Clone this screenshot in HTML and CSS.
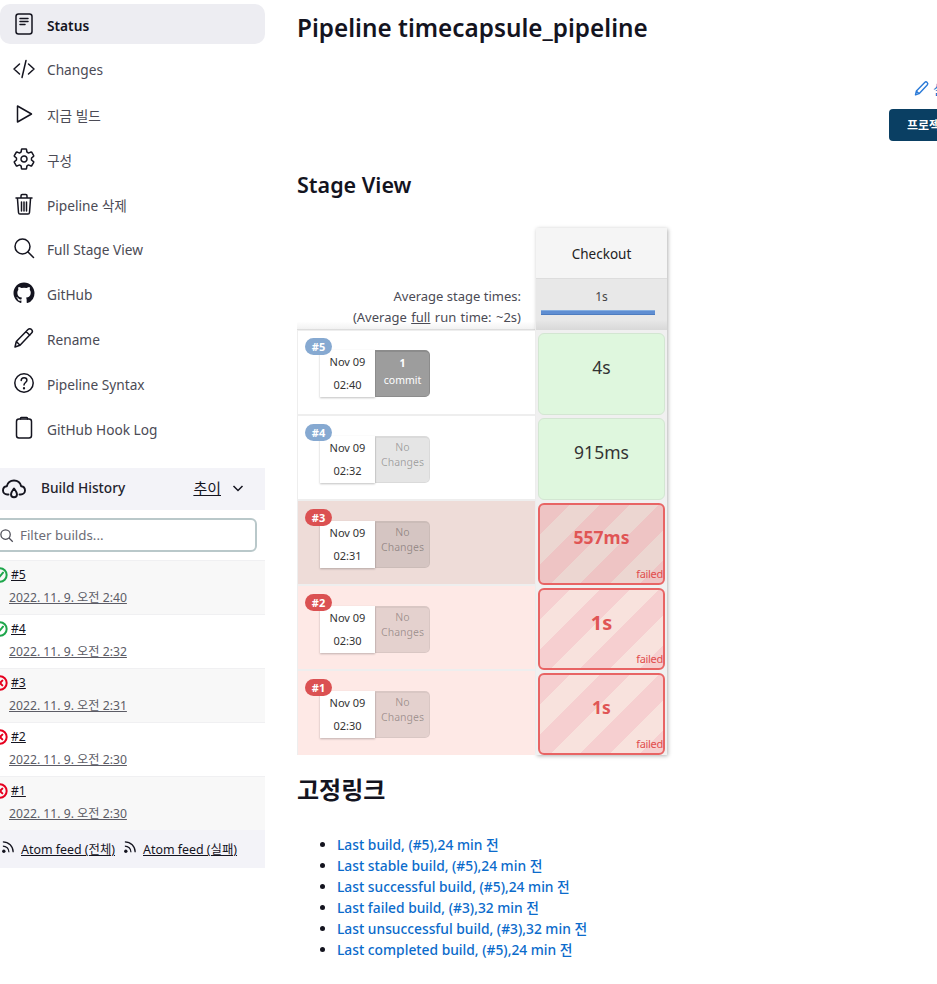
FILE: index.html
```html
<!DOCTYPE html>
<html lang="ko">
<head>
<meta charset="utf-8">
<title>timecapsule_pipeline</title>
<link rel="stylesheet" href="styles.css">
</head>
<body>
<div class="page">
  <aside class="sidebar">
    <nav class="tasks">
      <a class="task active"><svg class="ico" viewBox="0 0 24 24"><rect x="4" y="2" width="16" height="20" rx="2.500"/><path d="M8 6.500h8M8 9.500h8M8 12.500h5"/></svg>Status</a>
      <a class="task"><svg class="ico" viewBox="0 0 24 24"><path d="M7.500 7L2 12l5.500 5M16.500 7l5.500 5-5.500 5M14 3.500L10 20.500"/></svg>Changes</a>
      <a class="task"><svg class="ico" viewBox="0 0 24 24"><path d="M5.500 4v16L19.500 12z"/></svg>지금 빌드</a>
      <a class="task"><svg class="ico" viewBox="0 0 512 512"><path class="thick" d="M262.290 192.310a64 64 0 1057.400 57.400 64.130 64.130 0 00-57.400-57.400zM416.390 256a154.340 154.340 0 01-1.530 20.790l45.210 35.460a10.810 10.810 0 012.450 13.750l-42.770 74a10.810 10.810 0 01-13.140 4.590l-44.900-18.080a16.110 16.110 0 00-15.170 1.750A164.480 164.480 0 01325 400.800a15.940 15.940 0 00-8.820 12.140l-6.730 47.890a11.080 11.080 0 01-10.680 9.170h-85.540a11.110 11.110 0 01-10.690-8.870l-6.720-47.820a16.070 16.070 0 00-9-12.220 155.300 155.300 0 01-21.460-12.570 16 16 0 00-15.110-1.710l-44.890 18.070a10.810 10.810 0 01-13.140-4.580l-42.770-74a10.800 10.800 0 012.450-13.750l38.210-30a16.050 16.050 0 006-14.080c-.36-4.170-.58-8.330-.58-12.500s.21-8.270.58-12.350a16 16 0 00-6.070-13.940l-38.190-30A10.810 10.810 0 0149.480 186l42.770-74a10.810 10.810 0 0113.140-4.590l44.900 18.080a16.110 16.110 0 0015.170-1.750A164.480 164.480 0 01187 111.200a15.940 15.940 0 008.820-12.140l6.730-47.890A11.080 11.080 0 01213.230 42h85.540a11.110 11.110 0 0110.690 8.870l6.720 47.820a16.070 16.070 0 009 12.220 155.300 155.300 0 0121.460 12.570 16 16 0 0015.110 1.710l44.890-18.070a10.810 10.810 0 0113.140 4.580l42.770 74a10.800 10.800 0 01-2.450 13.750l-38.210 30a16.050 16.050 0 00-6.050 14.080c.33 4.140.55 8.300.55 12.470z"/></svg>구성</a>
      <a class="task"><svg class="ico" viewBox="0 0 24 24"><path d="M5.500 7l1 13.500c.1.900.700 1.500 1.500 1.500h8c.8 0 1.400-.6 1.500-1.500l1-13.500M4 6h16M9 6V3.700c0-.7.500-1.200 1.200-1.200h3.600c.7 0 1.200.5 1.200 1.200V6M9.500 10v9M12 10v9M14.500 10v9"/></svg>Pipeline 삭제</a>
      <a class="task"><svg class="ico" viewBox="0 0 24 24"><circle cx="10.500" cy="10.500" r="7.500"/><path d="M16 16l5.500 5.500"/></svg>Full Stage View</a>
      <a class="task"><svg class="ico solid" viewBox="0 0 24 24"><path d="M12 1.500C6.200 1.500 1.500 6.200 1.500 12c0 4.640 3 8.570 7.180 9.960.53.090.72-.23.72-.51v-1.830c-2.920.64-3.530-1.240-3.530-1.240-.48-1.210-1.170-1.530-1.170-1.530-.96-.65.070-.64.070-.64 1.060.070 1.620 1.090 1.620 1.090.94 1.610 2.470 1.140 3.070.87.090-.68.370-1.140.67-1.400-2.330-.27-4.790-1.170-4.790-5.190 0-1.140.41-2.080 1.080-2.810-.11-.27-.47-1.330.10-2.780 0 0 .89-.28 2.890 1.080a10 10 0 015.270 0c2-1.360 2.890-1.080 2.890-1.080.58 1.450.21 2.510.10 2.780.68.730 1.080 1.670 1.080 2.810 0 4.030-2.460 4.910-4.800 5.180.37.330.71.960.71 1.940v2.870c0 .28.190.61.73.50A10.500 10.500 0 0022.500 12C22.500 6.200 17.800 1.500 12 1.500z"/></svg>GitHub</a>
      <a class="task"><svg class="ico" viewBox="0 0 24 24"><path d="M3 21l1.300-5.500L16 3.500c1-1 2.500-1 3.500 0s1.100 2.500.1 3.500L8 19.300zM4.300 15.500L8 19.300M14 5.500l3.800 3.800"/></svg>Rename</a>
      <a class="task"><svg class="ico" viewBox="0 0 24 24"><circle cx="12" cy="12" r="9.200"/><path d="M9.200 9.500c0-1.700 1.300-2.800 2.900-2.800s2.800 1.100 2.800 2.500c0 2.300-2.900 2.300-2.900 4.800"/><path class="dot" d="M12 17v.4"/></svg>Pipeline Syntax</a>
      <a class="task"><svg class="ico" viewBox="0 0 24 24"><rect x="4.500" y="3" width="15" height="19" rx="2.500"/><path d="M8.500 3V2.300c0-.5.400-.8.800-.8h5.400c.4 0 .8.300.8.800V3"/></svg>GitHub Hook Log</a>
    </nav>

    <section class="history">
      <header class="history-head">
        <svg class="ico head-ico" viewBox="0 0 24 24"><path d="M6.500 17.500H5.200C3 17.500 1 15.800 1 13.500s1.700-3.900 3.800-4.200C5.600 6 8.500 3.500 12 3.500s6.400 2.500 7.200 5.800c2.100.3 3.800 1.900 3.800 4.200s-2 4-4.200 4h-1.300"/><path d="M12 11.500c-1.600 2.200-3 3.800-3 5.800a3 3 0 006 0c0-2-1.400-3.600-3-5.800z"/></svg>
        <span class="history-title">Build History</span>
        <a class="trend">추이</a>
        <svg class="chev" viewBox="0 0 12 12"><path d="M1.500 4l4.500 4.500L10.500 4"/></svg>
      </header>
      <div class="filter">
        <svg class="filter-ico" viewBox="0 0 24 24"><circle cx="10.500" cy="10.500" r="7.500"/><path d="M16 16l6 6"/></svg>
        <span class="filter-text">Filter builds...</span>
      </div>
      <ul class="builds">
        <li class="build">
          <svg class="st ok" viewBox="0 0 24 24"><circle cx="12" cy="12" r="10"/><path d="M7.500 12.500l3 3 6-7"/></svg>
          <div><a class="num">#5</a><a class="when">2022. 11. 9. 오전 2:40</a></div>
        </li>
        <li class="build">
          <svg class="st ok" viewBox="0 0 24 24"><circle cx="12" cy="12" r="10"/><path d="M7.500 12.500l3 3 6-7"/></svg>
          <div><a class="num">#4</a><a class="when">2022. 11. 9. 오전 2:32</a></div>
        </li>
        <li class="build">
          <svg class="st bad" viewBox="0 0 24 24"><circle cx="12" cy="12" r="10"/><path d="M8.500 8.500l7 7M15.500 8.500l-7 7"/></svg>
          <div><a class="num">#3</a><a class="when">2022. 11. 9. 오전 2:31</a></div>
        </li>
        <li class="build">
          <svg class="st bad" viewBox="0 0 24 24"><circle cx="12" cy="12" r="10"/><path d="M8.500 8.500l7 7M15.500 8.500l-7 7"/></svg>
          <div><a class="num">#2</a><a class="when">2022. 11. 9. 오전 2:30</a></div>
        </li>
        <li class="build">
          <svg class="st bad" viewBox="0 0 24 24"><circle cx="12" cy="12" r="10"/><path d="M8.500 8.500l7 7M15.500 8.500l-7 7"/></svg>
          <div><a class="num">#1</a><a class="when">2022. 11. 9. 오전 2:30</a></div>
        </li>
      </ul>
      <footer class="feeds">
        <a class="feed"><svg class="rss" viewBox="0 0 16 16"><circle cx="3" cy="13" r="1.800"/><path class="arc" d="M2 7.500c3.700 0 6.500 2.800 6.500 6.500M2 3c6.200 0 11 4.800 11 11"/></svg><span>Atom feed (전체)</span></a>
        <a class="feed"><svg class="rss" viewBox="0 0 16 16"><circle cx="3" cy="13" r="1.800"/><path class="arc" d="M2 7.500c3.700 0 6.500 2.800 6.500 6.500M2 3c6.200 0 11 4.800 11 11"/></svg><span>Atom feed (실패)</span></a>
      </footer>
    </section>
  </aside>

  <main class="main">
    <h1 class="title">Pipeline timecapsule_pipeline</h1>
    <div class="actions">
      <a class="edit"><svg class="edit-ico" viewBox="0 0 24 24"><path d="M3.500 21l1.300-5.500L16.500 3.500c1-1 2.500-1 3.500 0s1.100 2.500.1 3.500L8.500 19.300zM4.800 15.500l3.700 3.800"/></svg>설명 추가</a>
      <button class="disable">프로젝트 비활성화</button>
    </div>
    <h2 class="stage-heading">Stage View</h2>

    <div class="stage">
      <div class="runs">
        <div class="avg">
          <span>Average stage times:</span>
          <span class="avg-full">(Average <u>full</u> run time: ~2s)</span>
        </div>
        <div class="run first">
          <span class="badge blue">#5</span>
          <div class="date"><span>Nov 09</span><span>02:40</span></div>
          <div class="commits has"><b>1</b><span>commit</span></div>
        </div>
        <div class="run">
          <span class="badge blue">#4</span>
          <div class="date"><span>Nov 09</span><span>02:32</span></div>
          <div class="commits"><span>No</span><span>Changes</span></div>
        </div>
        <div class="run failed-dark">
          <span class="badge red">#3</span>
          <div class="date"><span>Nov 09</span><span>02:31</span></div>
          <div class="commits"><span>No</span><span>Changes</span></div>
        </div>
        <div class="run failed">
          <span class="badge red">#2</span>
          <div class="date"><span>Nov 09</span><span>02:30</span></div>
          <div class="commits"><span>No</span><span>Changes</span></div>
        </div>
        <div class="run failed last">
          <span class="badge red">#1</span>
          <div class="date"><span>Nov 09</span><span>02:30</span></div>
          <div class="commits"><span>No</span><span>Changes</span></div>
        </div>
      </div>
      <div class="col">
        <div class="col-head">Checkout</div>
        <div class="col-avg"><span>1s</span><i class="bar"></i></div>
        <div class="cell"><div class="box ok">4s</div></div>
        <div class="cell"><div class="box ok">915ms</div></div>
        <div class="cell"><div class="box err dark">557ms<em>failed</em></div></div>
        <div class="cell"><div class="box err t20">1s<em>failed</em></div></div>
        <div class="cell"><div class="box err">1s<em>failed</em></div></div>
      </div>
    </div>

    <h2 class="links-heading">고정링크</h2>
    <ul class="links">
      <li><a>Last build, (#5),24 min 전</a></li>
      <li><a>Last stable build, (#5),24 min 전</a></li>
      <li><a>Last successful build, (#5),24 min 전</a></li>
      <li><a>Last failed build, (#3),32 min 전</a></li>
      <li><a>Last unsuccessful build, (#3),32 min 전</a></li>
      <li><a>Last completed build, (#5),24 min 전</a></li>
    </ul>
  </main>
</div>
</body>
</html>
```
FILE: styles.css
```css
* { box-sizing: border-box; }
html, body { margin: 0; padding: 0; height: 100%; overflow: hidden; background: #fff; }
body {
  font-family: "Noto Sans", "Noto Sans CJK KR", sans-serif;
  font-size: 14px;
  color: #14141f;
}
a { color: inherit; }
ul { list-style: none; margin: 0; padding: 0; }
.page { display: flex; width: 1200px; align-items: flex-start; }

/* sidebar */
.sidebar { width: 265px; flex: none; padding-top: 4px; }
.tasks { display: flex; flex-direction: column; gap: 4.900px; }
.task {
  display: flex; align-items: center; height: 40px; padding: 2px 0 0 12px;
  border-radius: 10px; color: #4b4b55; font-size: 13.700px;
}
.task.active { background: #ededf2; color: #14141f; font-weight: 600; }
.ico {
  width: 24px; height: 24px; margin: -2px 11px 0 0; flex: none;
  fill: none; stroke: #14141f; stroke-width: 1.500; stroke-linecap: round; stroke-linejoin: round;
}
.ico .thick { stroke-width: 32; }
.ico .dot { stroke-width: 2.200; }
.ico.solid { fill: #14141f; stroke: none; }

.history { margin-top: 20px; margin-left: -7px; width: 272px; }
.history-head {
  display: flex; align-items: center; height: 42px; padding: 0 21px 3px 9px;
  background: #f3f3f8;
}
.head-ico { width: 24px; height: 24px; margin: 3px 15px 0 0; stroke-width: 1.900; }
.history-title { font-weight: 500; flex: 1; color: #23232d; font-size: 13.700px; }
.trend { text-decoration: underline; margin-right: 11px; color: #14141f; font-size: 15px; }
.chev { width: 12px; height: 12px; fill: none; stroke: #14141f; stroke-width: 1.500; }
.filter {
  display: flex; align-items: center; height: 34px; margin: 8px 8px 8px 0;
  padding-left: 4px; border: 2px solid #b9c8ca; border-radius: 6px;
}
.filter-ico { width: 15px; height: 15px; margin-right: 6px; fill: none; stroke: #4b4b55; stroke-width: 2; }
.filter-text { color: #6d6d76; font-size: 13.300px; }
.build {
  display: flex; height: 54px; padding-left: 0; border-top: 1px solid #f0f0f2;
  font-size: 12.200px;
}
.build:nth-child(odd) { background: #f8f8f8; }
.build > div { display: flex; flex-direction: column; padding-top: 5px; }
.st { width: 16px; height: 16px; margin: 6px 3px 0 -1px; flex: none; fill: none; stroke-width: 3; stroke-linecap: round; stroke-linejoin: round; }
.st.ok { stroke: #1ea64b; }
.st.bad { stroke: #e6001f; }
.num { text-decoration: underline; line-height: 18px; color: #14141f; }
.when { text-decoration: underline; margin-top: 5px; margin-left: -2px; line-height: 18px; color: #5c5c66; }
.feeds {
  display: flex; gap: 8px; align-items: center; height: 38px; padding-left: 8px;
  background: #f3f3f8; font-size: 12.400px;
}
.feed { display: flex; align-items: center; gap: 5px; }
.feed span { text-decoration: underline; }
.rss { width: 15px; height: 15px; margin-top: -5px; fill: #14141f; }
.rss .arc { fill: none; stroke: #14141f; stroke-width: 1.300; }

/* main */
.main { flex: none; width: 800px; margin-left: 32px; }
.title { font-size: 24.300px; font-weight: 600; margin: 0; padding-top: 10px; line-height: 35px; color: #14141f; }
.actions { display: flex; flex-direction: column; align-items: flex-start; margin: 33px 0 0 592px; }
.edit { display: flex; align-items: center; margin-left: 24px; height: 20px; color: #0b6bcb; font-size: 13px; }
.edit-ico { width: 17px; height: 17px; margin-right: 3px; fill: none; stroke: #2b7bd8; stroke-width: 2; stroke-linejoin: round; }
.disable {
  margin-top: 11px; height: 32px; padding: 0 18px; border: none; border-radius: 4px;
  background: #0a3f63; color: #fff; font: 700 12px "Noto Sans", "Noto Sans CJK KR", sans-serif;
}
.stage-heading { font-size: 21.500px; font-weight: 600; margin: 0; padding-top: 29px; line-height: 30px; }

.stage { display: flex; margin-top: 28px; width: 370px; }
.runs { width: 238px; flex: none; padding-top: 50px; }
.avg {
  display: flex; flex-direction: column; align-items: flex-end; height: 52px; padding: 8px 14px 0 0;
  font-size: 13px; line-height: 21px; color: #4b4b55;
  background: linear-gradient(#fff 85%, #f2f2f2);
  border-bottom: 1px solid #ddd;
}
.avg-full { word-spacing: 1px; }
.run {
  position: relative; display: flex; height: 85px; padding: 20px 0 0 22px;
  border: 1px solid #eee; border-width: 1px 0 1px 1px;
  background: #fff;
}
.run.first { padding-top: 19px; }
.run.first .badge { top: 7px; }
.run.failed-dark { background: #eedcd8; }
.run.failed { background: #fee9e6; }
.run.last { border-bottom: 0; }
.badge {
  position: absolute; left: 7px; top: 8px; width: 27px; height: 17px; border-radius: 9px;
  color: #fff; font-size: 11px; font-weight: 700; line-height: 17px; text-align: center;
}
.badge.blue { background: #86a9d1; }
.badge.red { background: #db5152; }
.date {
  display: flex; flex-direction: column; align-items: center; justify-content: space-around;
  width: 55px; height: 47px; background: #fff; box-shadow: 0 1px 2px rgba(0,0,0,.25);
  font-size: 11px; color: #333; line-height: 16px;
}
.commits {
  display: flex; flex-direction: column; align-items: center; justify-content: center;
  width: 55px; height: 47px; padding-bottom: 10px; border-radius: 0 5px 5px 0;
  background: rgba(0,0,0,.1); border: 1px solid rgba(0,0,0,.05); border-top-width: 2px;
  color: rgba(0,0,0,.3); font-size: 10.500px; line-height: 15px;
}
.commits.has { padding-bottom: 4px; background: #9d9d9d; color: #fff; border-color: #8c8c8c; line-height: 17px; }
.commits.has b { font-weight: 700; }

.col {
  width: 131px; flex: none; margin-left: 1px; background: #f0f0f0;
  box-shadow: 1px 1px 4px rgba(0,0,0,.3);
}
.col-head {
  height: 50px; padding-top: 2px; background: #f5f5f5; display: flex; align-items: center; justify-content: center;
  font-size: 13.500px; font-weight: 400; color: #222;
}
.col-avg {
  height: 52px; padding: 6px 5px 0; text-align: center; font-size: 12px; line-height: 24px; color: #444;
  background: linear-gradient(#e8e8e8 80%, #d8d8d8); border-top: 1px solid #ddd;
}
.col-avg span { display: block; height: 25px; }
.bar { display: block; width: 114px; height: 5px; background: #5f8ed2; border-bottom: 1px solid #4d7cc0; border-top: 1px solid #85aee0; }
.cell { height: 85px; padding: 3px 2px 0; }
.box {
  position: relative; height: 82px; border-radius: 6px; display: flex; align-items: center; justify-content: center;
  padding-bottom: 14px; font-size: 17.500px; color: #333;
}
.box.ok { background: #dff7de; border: 1px solid #d3e6d2; }
.box.err {
  border: 2px solid #e86464; color: #e05555; font-weight: 700;
  background: repeating-linear-gradient(135deg, #f6cfd0 0 21px, #f8e2dd 21px 42px);
}
.box.err.dark { background: repeating-linear-gradient(135deg, #eec4c4 0 21px, #ecd6d1 21px 42px); }
.box.t20 { font-size: 20px; }
.box em {
  position: absolute; right: 0; bottom: 2px; font-style: normal; font-weight: 400; font-size: 11px; line-height: 14px; letter-spacing: -.3px; color: #e14d4d;
}

.links-heading { font-size: 24px; font-weight: 600; margin: 0; padding-top: 18px; line-height: 34px; }
.links { margin-top: 27px; padding-left: 40px; list-style: disc; }
.links li { height: 21px; line-height: 21px; font-size: 13.800px; font-weight: 500; color: #14141f; }
.links a { color: #0b6bcb; }
```
